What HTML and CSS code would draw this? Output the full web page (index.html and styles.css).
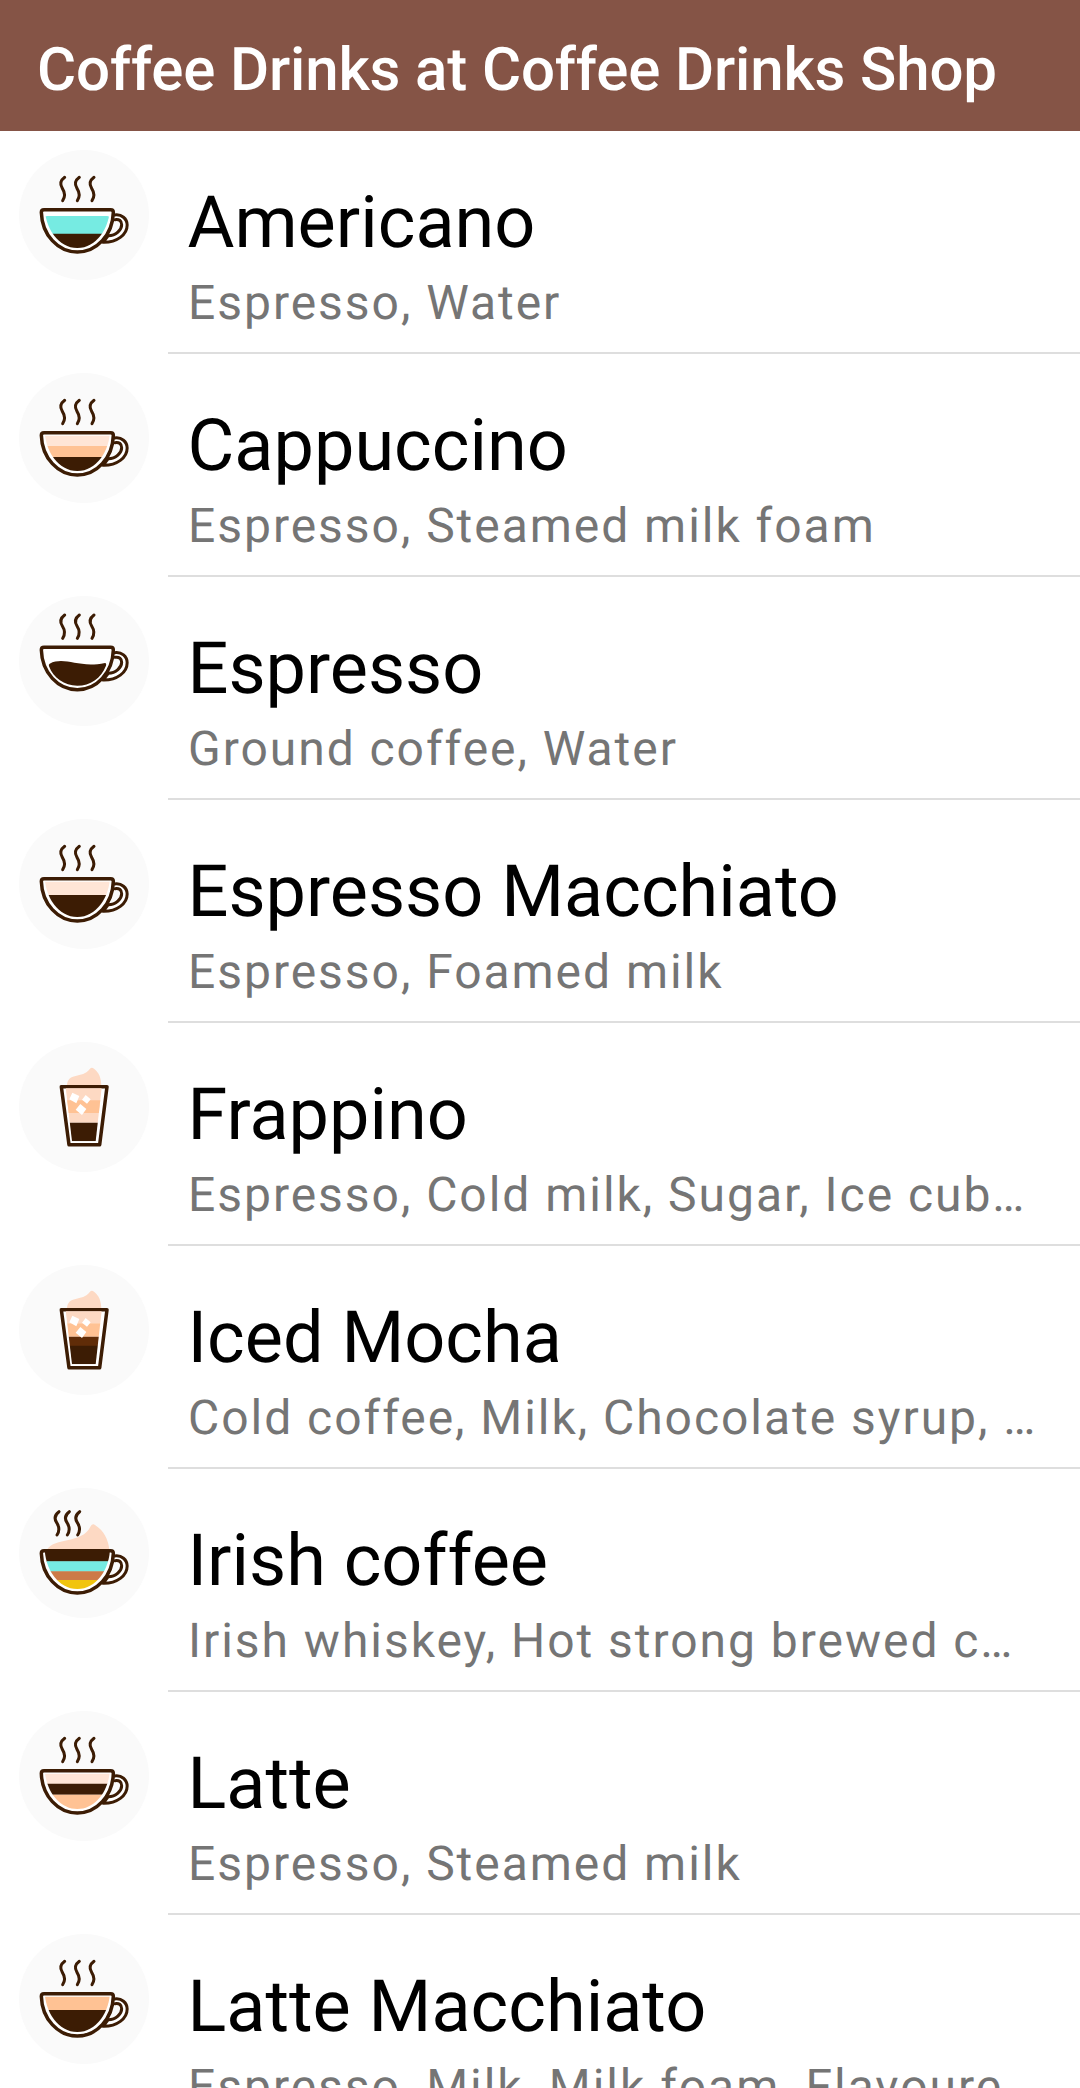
FILE: index.html
```html
<!DOCTYPE html>
<html lang="en">
<head>
<meta charset="utf-8">
<title>Coffee Drinks</title>
<link rel="stylesheet" href="styles.css">
</head>
<body>
<svg class="defs" aria-hidden="true">
  <defs>
    <clipPath id="bowl"><path d="M77 160H273C276 230 234 294 175 294C116 294 74 230 77 160Z"/></clipPath>
    <clipPath id="glass"><path d="M138 119H250L230 298H159Z"/></clipPath>
    <symbol id="steam" viewBox="0 0 390 390">
      <g class="line steam-line">
        <path id="wisp" d="M137 82C122 93 123 104 130 115C139 129 139 140 131 152"/>
        <use href="#wisp" x="44"/><use href="#wisp" x="88"/>
      </g>
    </symbol>
    <symbol id="cup" viewBox="0 0 390 390">
      <g class="line">
        <path class="white handle" d="M286 195C308 191 324.500 207 324.500 225C324.500 254 294 278 252 277L268 257C291 257 308 239 308 224C308 213 301 207 288 209"/>
        <path class="white" d="M75 179H275Q283 179 283 187C281 255 233 306 175 306C117 306 69 255 67 187Q67 179 75 179Z"/>
      </g>
    </symbol>
    <symbol id="tumbler" viewBox="0 0 390 390">
      <path class="foam" d="M144 133C144 88 190 112 213 80Q218 74 225 80C240 91 247 108 247 133Z"/>
      <path class="line white" d="M127 134H264L242 308H150Z"/>
    </symbol>
    <symbol id="ice" viewBox="0 0 390 390">
      <g class="white">
        <path d="M160 152l21 10-9 22-21-12zM200 159l15 13-11 13-15-12zM184 186l18 15-13 18-19-16z"/>
      </g>
    </symbol>
  </defs>
</svg>
<header class="bar"><h1>Coffee Drinks at Coffee Drinks Shop</h1></header>
<main class="list">
  <article class="row">
    <svg class="icon" viewBox="0 0 390 390"><use href="#steam"/><use href="#cup"/><g clip-path="url(#bowl)"><path class="water" d="M70 204Q70 198 86 198H264Q273 198 273 210V252H70Z"/><path class="dark" d="M70 251H280V300H70Z"/></g></svg>
    <div class="text"><h2>Americano</h2><p>Espresso, Water</p></div>
  </article>
  <article class="row">
    <svg class="icon" viewBox="0 0 390 390"><use href="#steam"/><use href="#cup"/><g clip-path="url(#bowl)"><path class="cream" d="M70 188H280V220H70Z"/><path class="milk" d="M70 219H280V252H70Z"/><path class="dark" d="M70 252H280V300H70Z"/></g></svg>
    <div class="text"><h2>Cappuccino</h2><p>Espresso, Steamed milk foam</p></div>
  </article>
  <article class="row">
    <svg class="icon" viewBox="0 0 390 390"><g transform="translate(0 -25)"><use href="#steam"/><use href="#cup"/><path class="dark" d="M92 228C139 205 177 243 258 226Q263 226 261 234C246 272 214 294 175 294C136 294 103 271 90 236Q88 230 92 228Z"/></g></svg>
    <div class="text"><h2>Espresso</h2><p>Ground coffee, Water</p></div>
  </article>
  <article class="row">
    <svg class="icon" viewBox="0 0 390 390"><use href="#steam"/><use href="#cup"/><g clip-path="url(#bowl)"><path class="cream" d="M70 188H280V228H70Z"/><path class="dark" d="M70 228H280V300H70Z"/></g></svg>
    <div class="text"><h2>Espresso Macchiato</h2><p>Espresso, Foamed milk</p></div>
  </article>
  <article class="row">
    <svg class="icon" viewBox="0 0 390 390"><use href="#tumbler"/><g clip-path="url(#glass)"><path class="foam" d="M130 139H260V242H130Z"/><path class="milk" d="M130 175H260V213H130Z"/><path class="dark" d="M130 242H260V299H130Z"/></g><use href="#ice"/></svg>
    <div class="text"><h2>Frappino</h2><p>Espresso, Cold milk, Sugar, Ice cub…</p></div>
  </article>
  <article class="row">
    <svg class="icon" viewBox="0 0 390 390"><use href="#tumbler"/><g clip-path="url(#glass)"><path class="foam" d="M130 139H260V175H130Z"/><path class="milk" d="M130 175H260V215H130Z"/><path class="mocha" d="M130 215H260V243H130Z"/><path class="dark" d="M130 242H260V299H130Z"/></g><use href="#ice"/></svg>
    <div class="text"><h2>Iced Mocha</h2><p>Cold coffee, Milk, Chocolate syrup, …</p></div>
  </article>
  <article class="row">
    <svg class="icon" viewBox="0 0 390 390"><g class="line steam-line"><use href="#wisp" x="-17" y="-11"/><use href="#wisp" x="14" y="-11"/><use href="#wisp" x="45" y="-11"/></g><path class="foam" d="M84 185C107 147 188 170 215 115Q220 105 229 112C254 128 268 154 271 185Z"/><g transform="translate(0 9)"><use href="#cup"/><g clip-path="url(#bowl)"><path class="dark" d="M70 175H280V212H70Z"/><path class="water" d="M70 211H280V242H70Z"/><path class="whiskey" d="M70 241H280V268H70Z"/><path class="sugar" d="M70 267H280V300H70Z"/></g></g></svg>
    <div class="text"><h2>Irish coffee</h2><p>Irish whiskey, Hot strong brewed c…</p></div>
  </article>
  <article class="row">
    <svg class="icon" viewBox="0 0 390 390"><use href="#steam"/><use href="#cup"/><g clip-path="url(#bowl)"><path class="cream" d="M70 188H280V219H70Z"/><path class="dark" d="M70 218H280V251H70Z"/><path class="milk" d="M70 251H280V300H70Z"/></g></svg>
    <div class="text"><h2>Latte</h2><p>Espresso, Steamed milk</p></div>
  </article>
  <article class="row">
    <svg class="icon" viewBox="0 0 390 390"><use href="#steam"/><use href="#cup"/><g clip-path="url(#bowl)"><path class="milk" d="M70 188H280V228H70Z"/><path class="dark" d="M70 228H280V300H70Z"/></g></svg>
    <div class="text"><h2>Latte Macchiato</h2><p>Espresso, Milk, Milk foam, Flavoure…</p></div>
  </article>
</main>
</body>
</html>
```
FILE: styles.css
```css
html, body { margin: 0; height: 2088px; overflow: hidden; }
body { background: #fff; font-family: Roboto, sans-serif; color: #000; text-rendering: geometricPrecision; }
h1, h2, p { margin: 0; white-space: nowrap; }
.defs { display: block; width: 0; height: 0; }
.bar { height: 131px; box-sizing: border-box; padding: 34px 0 0 37px; background: #855446; color: #fff; }
h1 { font-size: 60px; line-height: 72px; font-weight: 500; letter-spacing: -0.15px; }
.row { display: flex; height: 223px; }
.icon { flex: none; width: 130px; height: 130px; margin: 19px 19px 0; border-radius: 50%; background: #fafafa; }
.text { flex: 1; box-sizing: border-box; padding: 49px 0 0 19.5px; border-bottom: 2px solid #dedede; }
h2 { font-size: 72px; line-height: 86px; font-weight: 400; }
p { font-size: 48px; line-height: 58px; margin: 8px 0 0 0.5px; letter-spacing: 1.96px; color: #757575; }
.line { fill: none; stroke: #3c1c04; stroke-width: 10.5; stroke-linejoin: round; stroke-linecap: round; }
.steam-line, .handle { stroke-width: 9; }
.white { fill: #fff; }
.dark { fill: #3c1c04; }
.water { fill: #76ebe2; }
.cream { fill: #ffe5d6; }
.milk { fill: #ffc294; }
.foam { fill: #fdd9c3; }
.mocha { fill: #602c08; }
.whiskey { fill: #cc7a48; }
.sugar { fill: #f1c40f; }
```
